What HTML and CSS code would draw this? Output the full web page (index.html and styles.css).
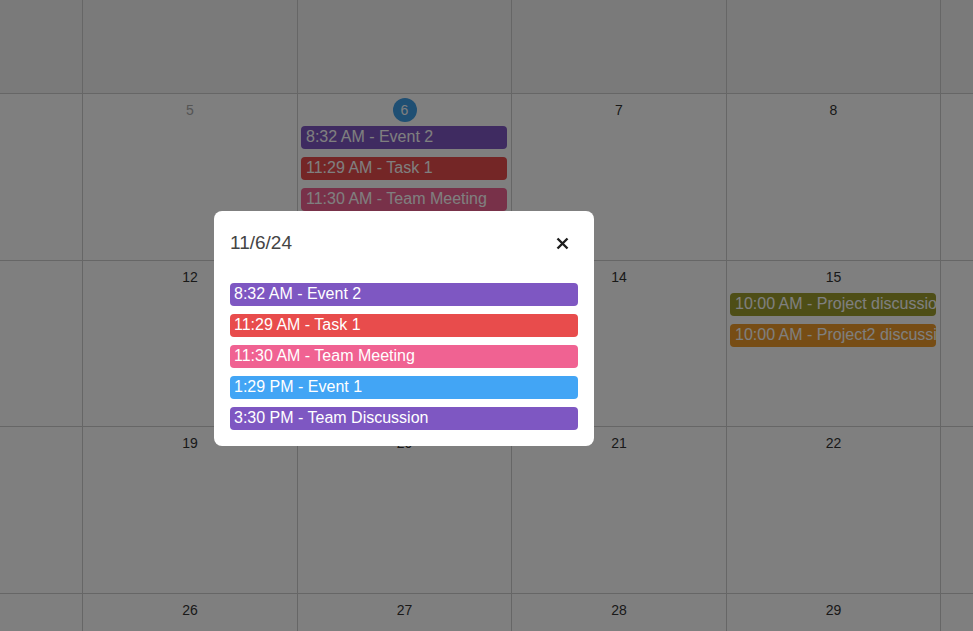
FILE: index.html
```html
<!DOCTYPE html>
<html lang="en">
<head>
<meta charset="utf-8">
<title>Calendar</title>
<link rel="stylesheet" href="styles.css">
</head>
<body>
<div class="viewport">
  <div class="month">
    <div class="cell other"><div class="date">28</div></div>
    <div class="cell other"><div class="date">29</div></div>
    <div class="cell other"><div class="date">30</div></div>
    <div class="cell other"><div class="date">31</div></div>
    <div class="cell other"><div class="date">1</div></div>
    <div class="cell other"><div class="date">2</div></div>
    <div class="cell other"><div class="date">3</div></div>

    <div class="cell"><div class="date">4</div></div>
    <div class="cell"><div class="date faded">5</div></div>
    <div class="cell">
      <div class="date"><span class="today">6</span></div>
      <div class="event purple">8:32 AM - Event 2</div>
      <div class="event red">11:29 AM - Task 1</div>
      <div class="event pink">11:30 AM - Team Meeting</div>
      <div class="event blue">1:29 PM - Event 1</div>
      <div class="event purple">3:30 PM - Team Discussion</div>
    </div>
    <div class="cell"><div class="date">7</div></div>
    <div class="cell"><div class="date">8</div></div>
    <div class="cell"><div class="date">9</div></div>
    <div class="cell"><div class="date">10</div></div>

    <div class="cell"><div class="date">11</div></div>
    <div class="cell"><div class="date">12</div></div>
    <div class="cell"><div class="date">13</div></div>
    <div class="cell"><div class="date">14</div></div>
    <div class="cell">
      <div class="date">15</div>
      <div class="event olive">10:00 AM - Project discussion</div>
      <div class="event orange">10:00 AM - Project2 discussion</div>
    </div>
    <div class="cell"><div class="date">16</div></div>
    <div class="cell"><div class="date">17</div></div>

    <div class="cell"><div class="date">18</div></div>
    <div class="cell"><div class="date">19</div></div>
    <div class="cell"><div class="date">20</div></div>
    <div class="cell"><div class="date">21</div></div>
    <div class="cell"><div class="date">22</div></div>
    <div class="cell"><div class="date">23</div></div>
    <div class="cell"><div class="date">24</div></div>

    <div class="cell"><div class="date">25</div></div>
    <div class="cell"><div class="date">26</div></div>
    <div class="cell"><div class="date">27</div></div>
    <div class="cell"><div class="date">28</div></div>
    <div class="cell"><div class="date">29</div></div>
    <div class="cell"><div class="date">30</div></div>
    <div class="cell"><div class="date">1</div></div>
  </div>
</div>

<div class="overlay"></div>

<div class="modal">
  <div class="modal-header">
    <div class="modal-title">11/6/24</div>
    <button class="close" aria-label="Close">
      <svg width="13" height="13" viewBox="0 0 13 13"><path d="M1.5 1.5 L11.5 11.5 M11.5 1.5 L1.5 11.5" stroke="#1e1e1e" stroke-width="2.4" stroke-linecap="butt" fill="none"/></svg>
    </button>
  </div>
  <div class="modal-list">
    <div class="pill purple">8:32 AM - Event 2</div>
    <div class="pill red">11:29 AM - Task 1</div>
    <div class="pill pink">11:30 AM - Team Meeting</div>
    <div class="pill blue">1:29 PM - Event 1</div>
    <div class="pill purple">3:30 PM - Team Discussion</div>
  </div>
</div>
</body>
</html>
```
FILE: styles.css
```css
* { box-sizing: border-box; }
html, body {
  margin: 0;
  padding: 0;
  width: 973px;
  height: 631px;
  overflow: hidden;
  background: #fff;
  font-family: "Liberation Sans", Arial, sans-serif;
}
.viewport {
  width: 973px;
  height: 631px;
  overflow: hidden;
}
.month {
  display: grid;
  grid-template-columns: 214px 214px 213px 214px 213px 214px 214px;
  grid-template-rows: 166px 166px 165px 166px 166px;
  gap: 1px;
  background: #ccc;
  margin-left: -132px;
  margin-top: -73px;
  width: max-content;
}
.cell {
  background: #fff;
  padding-top: 4px;
  overflow: hidden;
  display: flex;
  flex-direction: column;
}
.cell.other { background: #f4f4f4; }
.date {
  flex: none;
  height: 24px;
  line-height: 24px;
  text-align: center;
  font-size: 14px;
  color: #333;
}
.date.faded { color: #aaa; }
.today {
  display: inline-block;
  width: 24px;
  height: 24px;
  border-radius: 50%;
  background: #3f9ee6;
  color: #fff;
}
.event {
  flex: none;
  margin: 4px 4px 4px 3px;
  padding: 2px 5px 3px;
  line-height: 18px;
  font-size: 16px;
  color: #fff;
  border-radius: 4px;
  white-space: nowrap;
  overflow: hidden;
}
.purple { background: #7e57c2; }
.red { background: #e84c4c; }
.pink { background: #f06292; }
.blue { background: #42a5f5; }
.olive { background: #9c9c2c; }
.orange { background: #ee9b2a; }

.overlay {
  position: fixed;
  inset: 0;
  background: rgba(0, 0, 0, 0.5);
}
.modal {
  position: absolute;
  left: 214px;
  top: 211px;
  width: 380px;
  background: #fff;
  border-radius: 8px;
  padding: 16px;
}
.modal-header {
  display: flex;
  align-items: center;
  justify-content: space-between;
  height: 32px;
}
.modal-title {
  font-size: 19px;
  color: #444;
}
.close {
  width: 32px;
  height: 32px;
  border: 0;
  background: transparent;
  padding: 0;
  display: flex;
  align-items: center;
  justify-content: center;
  cursor: pointer;
}
.modal-list {
  margin-top: 24px;
  display: flex;
  flex-direction: column;
  gap: 8px;
}
.pill {
  padding: 2px 4px 3px;
  line-height: 18px;
  font-size: 16px;
  color: #fff;
  border-radius: 4px;
  white-space: nowrap;
  overflow: hidden;
}
```
